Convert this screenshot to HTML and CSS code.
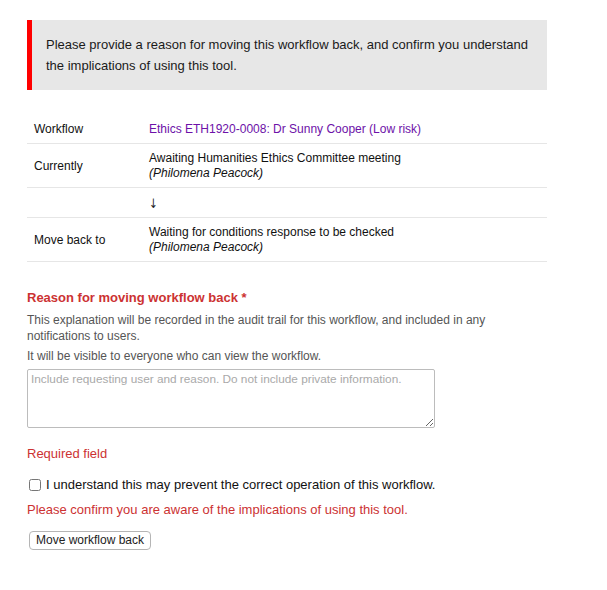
FILE: index.html
```html
<!DOCTYPE html>
<html>
<head>
<meta charset="utf-8">
<link rel="stylesheet" href="styles.css">
</head>
<body>
<div class="page">
  <div class="notice">
    <p>Please provide a reason for moving this workflow back, and confirm you understand the implications of using this tool.</p>
  </div>

  <table class="info">
    <tr class="row-short">
      <th>Workflow</th>
      <td><a class="wf-link" href="#">Ethics ETH1920-0008: Dr Sunny Cooper (Low risk)</a></td>
    </tr>
    <tr>
      <th>Currently</th>
      <td>Awaiting Humanities Ethics Committee meeting<br><i>(Philomena Peacock)</i></td>
    </tr>
    <tr class="row-arrow">
      <th></th>
      <td><span class="arrow">&#x2193;&#xFE0E;</span></td>
    </tr>
    <tr>
      <th>Move back to</th>
      <td>Waiting for conditions response to be checked<br><i>(Philomena Peacock)</i></td>
    </tr>
  </table>

  <form class="form">
    <label class="field-label" for="reason">Reason for moving workflow back *</label>
    <p class="help">This explanation will be recorded in the audit trail for this workflow, and included in any notifications to users.</p>
    <p class="help help-2">It will be visible to everyone who can view the workflow.</p>
    <textarea id="reason" class="reason" placeholder="Include requesting user and reason. Do not include private information."></textarea>
    <p class="error error-required">Required field</p>
    <label class="confirm"><input type="checkbox" class="check"> I understand this may prevent the correct operation of this workflow.</label>
    <p class="error error-confirm">Please confirm you are aware of the implications of using this tool.</p>
    <button type="button" class="btn">Move workflow back</button>
  </form>
</div>
</body>
</html>
```
FILE: styles.css
```css
* { box-sizing: border-box; }
html, body { margin: 0; padding: 0; background: #fff; }
body {
  font-family: "Liberation Sans", Arial, Helvetica, sans-serif;
  color: #111;
}
.page {
  padding: 20px 0 0 27px;
  width: 547px;
}
.notice {
  background: #e7e7e7;
  border-left: 5px solid #ff0000;
  padding: 14px 14px 13px 14px;
  height: 70px;
}
.notice p {
  margin: 0;
  font-size: 13px;
  line-height: 21px;
  color: #1a1a1a;
}
.info {
  width: 520px;
  margin-top: 24px;
  border-collapse: collapse;
  font-size: 12px;
}
.info th, .info td {
  text-align: left;
  font-weight: normal;
  vertical-align: middle;
  padding: 7px 7px 6px;
  line-height: 15px;
  height: 15px;
  border-bottom: 1px solid #e6e6e6;
  color: #111;
}
.info th { width: 115px; }
.row-short th, .row-short td { padding-top: 8px; padding-bottom: 6px; }
.row-arrow th, .row-arrow td { padding-top: 8px; padding-bottom: 6px; height: 30px; }
.arrow {
  font-family: "DejaVu Sans", sans-serif;
  font-size: 13px;
  line-height: 15px;
  height: 15px;
  color: #222;
  display: block;
  width: 10px;
  transform: scaleX(0.8);
  transform-origin: left center;
}
.wf-link { color: #6d11a8; text-decoration: none; }
.info i { font-style: italic; }

.form { margin-top: 28px; display: flex; flex-direction: column; align-items: flex-start; }
.field-label {
  font-weight: bold;
  font-size: 13px;
  color: #cc3232;
  line-height: 16px;
}
.help {
  margin: 6px 0 0;
  font-size: 12px;
  line-height: 16px;
  color: #555;
  width: 520px;
}
.help-2 { margin-top: 4px; }
.reason {
  margin-top: 5px;
  width: 408px;
  height: 59px;
  border: 1px solid #bcbcbc;
  border-radius: 2px;
  padding: 2px 3px;
  font-family: "Liberation Sans", Arial, sans-serif;
  font-size: 11.8px;
  resize: vertical;
}
.reason::placeholder { color: #a9a9a9; }
.error {
  margin: 0;
  font-size: 13px;
  line-height: 16px;
  color: #cc3232;
}
.error-required { margin-top: 18px; }
.confirm {
  margin-top: 15px;
  display: flex;
  align-items: center;
  gap: 5px;
  font-size: 13px;
  line-height: 16px;
  color: #111;
}
.check { margin: 0 0 0 2px; width: 12px; height: 12px; }
.error-confirm { margin-top: 9px; }
.btn {
  margin-top: 13px;
  margin-left: 2px;
  font-family: "Liberation Sans", Arial, sans-serif;
  font-size: 12px;
  padding: 2px 6px;
  height: 19px;
  line-height: 13px;
  background: #fff;
  border: 1px solid #b5b5b5;
  border-radius: 4px;
  color: #222;
}
```
